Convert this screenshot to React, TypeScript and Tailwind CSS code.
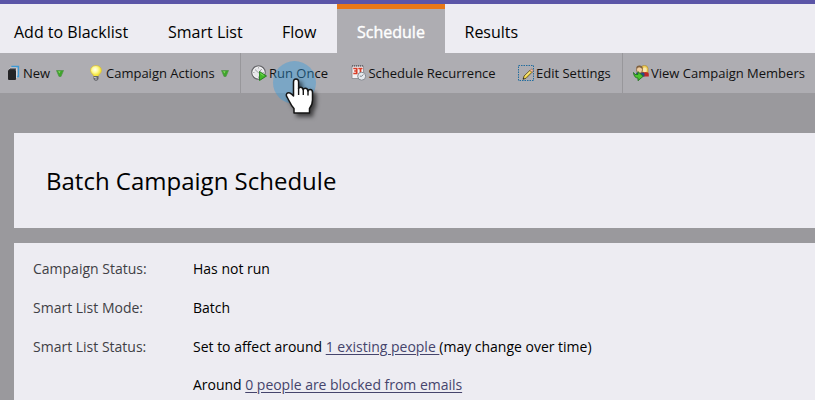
import React from "react";

function NewIcon() {
  return (
    <svg className="h-4 w-3 shrink-0" viewBox="0 0 12 16">
      <path d="M4 2.200V1.500h6.500V11.500H8.500" fill="none" stroke="#3c9ad6" strokeWidth="1.300" />
      <path d="M.8 4.200L2.500 3H8.600V13" fill="none" stroke="#e4e4e9" strokeWidth=".8" />
      <rect x="0" y="5" width="8" height="10" rx="1" fill="#242426" />
      <path d="M.5 5l1.500-1.500h6.300L7.500 5z" fill="#343438" />
    </svg>
  );
}

function BulbIcon() {
  return (
    <svg className="h-4 w-3 shrink-0" viewBox="0 0 12 16">
      <defs>
        <radialGradient id="bulb" cx=".42" cy=".38">
          <stop offset="0" stopColor="#fffff4" />
          <stop offset=".5" stopColor="#fffba0" />
          <stop offset="1" stopColor="#f3e53c" />
        </radialGradient>
      </defs>
      <path d="M6 .5C2.500.5.5 2.800.5 5.500c0 3 3 3.500 3.200 6h4.600c.2-2.500 3.200-3 3.200-6C11.500 2.800 9.500.5 6 .5z" fill="url(#bulb)" stroke="#d4b840" strokeWidth=".7" />
      <path d="M3.500 11h5v3L7 15.700H5L3.500 14z" fill="#66676b" />
      <path d="M4 12.500h2.500M5 14h2" stroke="#d5d5d8" strokeWidth=".8" />
    </svg>
  );
}

function DownIcon() {
  return (
    <svg className="h-[7px] w-2 shrink-0" viewBox="0 0 8 7">
      <path d="M.5.5h7L5 6.500H3z" fill="#3fa52b" stroke="#52904a" strokeWidth=".7" />
      <path d="M2 1.300h2.500L3.500 3.500z" fill="#84d662" />
    </svg>
  );
}

function RunIcon() {
  return (
    <svg className="h-4 w-4 shrink-0" viewBox="0 0 16 16">
      <circle cx="7.500" cy="7.500" r="6.700" fill="#e6e6e9" stroke="#66666a" strokeWidth="1.200" />
      <circle cx="7.500" cy="7.500" r="5.500" fill="none" stroke="#fafafa" strokeWidth=".8" />
      <path d="M7.500 2v1.500M2 7.500h1.500M11.500 7.500h1.500M7.500 11.500V13" stroke="#b0b0b4" />
      <path d="M4 4.500l3.500 3.300L10.800 4" fill="none" stroke="#a0a0a5" strokeWidth="1" />
      <path d="M8.500 6.500l7 4.500-7 4.500z" fill="#42b929" stroke="#237d1c" strokeWidth=".9" />
      <path d="M9.500 8.500l3 2" stroke="#8fe46c" strokeWidth=".8" />
    </svg>
  );
}

function CalendarIcon() {
  return (
    <svg className="h-4 w-4 shrink-0" viewBox="0 0 16 16">
      <path d="M1 1h11.500v12.500H1z" fill="#f4f2f4" stroke="#85858c" strokeWidth=".8" />
      <path d="M1 .8h11.500" stroke="#55555b" strokeWidth="1.200" strokeDasharray="1 1" />
      <path d="M2.300 3.500h3.400v5H2.300M3.200 6h2.500M7.300 3.500h2.200v5.500M9.500 3.500h2" fill="none" stroke="#d83d27" strokeWidth="1.700" />
      <circle cx="10.700" cy="11.200" r="4" fill="#e5e9ee" stroke="#84888f" />
      <path d="M10.700 11.200l1.800-1.800M10.700 11.200H8.800" fill="none" stroke="#73787e" strokeWidth=".9" />
    </svg>
  );
}

function EditIcon() {
  return (
    <svg className="h-4 w-4 shrink-0" viewBox="0 0 16 16">
      <rect x=".5" y=".5" width="15" height="15" fill="none" stroke="#226d9f" strokeDasharray="1.500 1" />
      <path d="M5 14.300l1-3.300L12 5.300l2 2-6 6z" fill="#edcf42" stroke="#51441e" strokeWidth=".8" />
      <path d="M12 5.300l1-1q1-.7 1.800.2t-.1 2L14 7.300z" fill="#efbda5" stroke="#8b604c" strokeWidth=".6" />
      <path d="M5 14.300l.5-1.700 1.100 1.200z" fill="#222" />
      <path d="M7.300 11.200L12 6.800" stroke="#fff7a4" strokeWidth=".9" />
    </svg>
  );
}

function MembersIcon() {
  return (
    <svg className="h-4 w-4 shrink-0" viewBox="0 0 16 16">
      <path d="M8.500 8V2.500Q8.500.4 11.500.4T15 3.200V8z" fill="#efcd55" stroke="#a98326" strokeWidth=".6" />
      <path d="M8 11.500V9q0-2 4-2t3.800 2v2.500z" fill="#bd2926" />
      <ellipse cx="11.800" cy="4.800" rx="2" ry="2.500" fill="#f8e6b0" />
      <path d="M3 8.500q0-1.500 4-1.500t4.500 1.500v3H6z" fill="#284d83" />
      <ellipse cx="6.500" cy="4.800" rx="3" ry="3.400" fill="#efcda0" stroke="#72502f" strokeWidth=".7" />
      <path d="M3.300 4Q3 .5 6.500.6T9.700 4Q8 2.300 6 2.300T3.300 4z" fill="#80603d" />
      <path d="M.5 7.500L2 9.500h3V6.700l5.200 4.600L5 15.700V13Q1 13 .5 7.500z" fill="#4bc42f" stroke="#227323" strokeWidth=".9" />
    </svg>
  );
}

function HandPointer() {
  return (
    <div className="absolute top-[8px] left-[32px] h-[64px] w-[50px]">
      <div className="h-[43px] w-[43px] rounded-full bg-[#2f9ce0]/40" />
      <svg className="absolute top-[17px] left-[12px] h-[38px] w-[30px] overflow-visible drop-shadow-[3px_3px_2px_rgba(0,0,0,0.6)]" viewBox="0 0 30 38">
        <path
          d="M11 1Q8.500 1 8.500 3.800V18L6.200 15.800Q3.500 13.700 1.800 15.600Q.6 17.200 2.300 19.500L5 24.500Q6.500 28 9 30.500V35H24.500V30.500Q27.500 27 27.500 22V14.500Q27.500 11.500 25.200 11.500Q23.500 11.500 23 13Q22.500 10.200 20.300 10.200Q18.600 10.200 18.200 11.800Q17.600 9.200 15.600 9.200Q14.200 9.200 13.600 10.500V3.800Q13.600 1 11 1Z"
          fill="#fff"
          stroke="#151515"
          strokeWidth="1.500"
          strokeLinejoin="round"
        />
        <path d="M13.600 10v7M18.300 11.500v5.500M23 12.500v5" fill="none" stroke="#151515" strokeWidth="1.400" />
      </svg>
    </div>
  );
}

export default function App() {
  return (
    <div className="flex h-[400px] w-[815px] flex-col overflow-hidden bg-[#9a999d] font-['Open_Sans','Noto_Sans',sans-serif] whitespace-nowrap text-black">
      <div className="h-1 shrink-0 bg-[#5b55a7]" />
      <nav className="flex h-[49px] shrink-0 bg-[#edecf2] text-[16px] leading-[24px]">
        <span className="w-[168px] pt-4 pl-[14px]">Add to Blacklist</span>
        <span className="w-[114px] pt-4">Smart List</span>
        <span className="w-[55px] pt-4">Flow</span>
        <span className="w-[108px] border-t-[5px] border-[#e97816] bg-[#aeadb2] pt-[11px] pl-5 text-white [-webkit-text-stroke:0.4px_white]">Schedule</span>
        <span className="pt-4 pl-[19.5px]">Results</span>
      </nav>
      <div className="relative flex h-10 shrink-0 bg-[#aeadb2] text-[13px] leading-[18px] text-[#111]">
        <div className="flex w-[241px] items-center border-r border-[#98979b] pl-2">
          <div className="flex w-[82px] items-center">
            <NewIcon />
            <span className="ml-[3px] w-[33px]">New</span>
            <DownIcon />
          </div>
          <BulbIcon />
          <span className="ml-1 w-[115px]">Campaign Actions</span>
          <DownIcon />
        </div>
        <div className="flex w-[382px] items-center border-r border-[#98979b] pl-[10px]">
          <div className="flex w-[100px] items-center gap-[2px]"><RunIcon /><span>Run Once</span></div>
          <div className="flex w-[167px] items-center gap-[1.5px]"><CalendarIcon /><span className="tracking-[-0.02px]">Schedule Recurrence</span></div>
          <div className="flex items-center gap-[2px]"><EditIcon /><span>Edit Settings</span></div>
        </div>
        <div className="flex items-center gap-[2px] pl-[10px]"><MembersIcon /><span>View Campaign Members</span></div>
        <div className="absolute top-0 left-[241px]"><HandPointer /></div>
      </div>
      <header className="mt-10 ml-[14px] flex h-[95px] shrink-0 items-center bg-[#edecf2] pl-8">
        <h1 className="text-[24px] leading-[34px]">Batch Campaign Schedule</h1>
      </header>
      <dl className="mt-[15px] ml-[14px] grid flex-1 grid-cols-[160px_1fr] content-start bg-[#edecf2] pt-4 pl-[19px] text-[14px] leading-[20px]">
        <dt className="h-[39px] text-[#3f3f45]">Campaign Status:</dt><dd>Has not run</dd>
        <dt className="h-[39px] text-[#3f3f45]">Smart List Mode:</dt><dd>Batch</dd>
        <dt className="h-[38px] text-[#3f3f45]">Smart List Status:</dt>
        <dd className="tracking-[-0.01px]">Set to affect around <a className="text-[#45446c] underline underline-offset-2">1 existing people </a>(may change over time)</dd>
        <dd className="col-start-2 tracking-[-0.02px]">Around <a className="text-[#45446c] underline underline-offset-2">0 people are blocked from emails</a></dd>
      </dl>
    </div>
  );
}
